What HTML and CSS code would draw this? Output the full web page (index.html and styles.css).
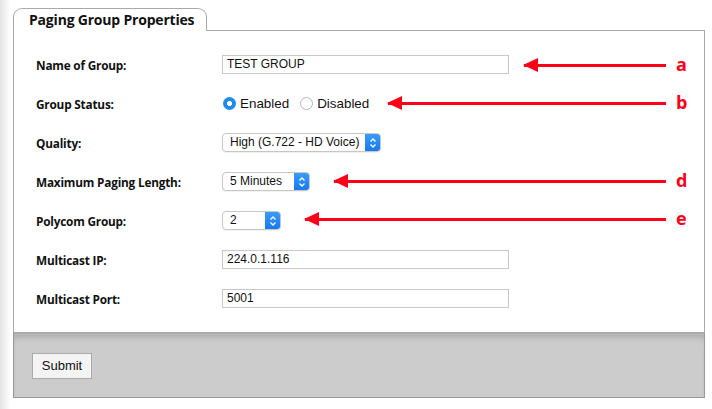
FILE: index.html
```html
<!DOCTYPE html>
<html>
<head>
<meta charset="utf-8">
<link rel="stylesheet" href="styles.css">
</head>
<body>
<div class="page">
  <div class="tabbar">
    <div class="tab">Paging Group Properties</div>
    <div class="tabline"></div>
  </div>
  <div class="panel">
    <div class="row">
      <div class="label">Name of Group:</div>
      <div class="field"><div class="input wide">TEST GROUP</div></div>
    </div>
    <div class="row">
      <div class="label">Group Status:</div>
      <div class="field radios">
        <span class="radio on"></span><span class="rtext">Enabled</span>
        <span class="radio"></span><span class="rtext">Disabled</span>
      </div>
    </div>
    <div class="row">
      <div class="label">Quality:</div>
      <div class="field"><div class="select s-quality"><span class="stext">High (G.722 - HD Voice)</span><span class="stepper"><svg width="8" height="12" viewBox="0 0 8 12"><path d="M1.5 4.5 L4 2 L6.5 4.5 M1.5 7.5 L4 10 L6.5 7.5" fill="none" stroke="#fff" stroke-width="1.3"/></svg></span></div></div>
    </div>
    <div class="row">
      <div class="label">Maximum Paging Length:</div>
      <div class="field"><div class="select s-length"><span class="stext">5 Minutes</span><span class="stepper"><svg width="8" height="12" viewBox="0 0 8 12"><path d="M1.5 4.5 L4 2 L6.5 4.5 M1.5 7.5 L4 10 L6.5 7.5" fill="none" stroke="#fff" stroke-width="1.3"/></svg></span></div></div>
    </div>
    <div class="row">
      <div class="label">Polycom Group:</div>
      <div class="field"><div class="select s-group"><span class="stext">2</span><span class="stepper"><svg width="8" height="12" viewBox="0 0 8 12"><path d="M1.5 4.5 L4 2 L6.5 4.5 M1.5 7.5 L4 10 L6.5 7.5" fill="none" stroke="#fff" stroke-width="1.3"/></svg></span></div></div>
    </div>
    <div class="row">
      <div class="label">Multicast IP:</div>
      <div class="field"><div class="input wide">224.0.1.116</div></div>
    </div>
    <div class="row">
      <div class="label">Multicast Port:</div>
      <div class="field"><div class="input wide">5001</div></div>
    </div>

    <div class="note n-a"><span class="arrow"></span><span class="letter">a</span></div>
    <div class="note n-b"><span class="arrow"></span><span class="letter">b</span></div>
    <div class="note n-d"><span class="arrow"></span><span class="letter">d</span></div>
    <div class="note n-e"><span class="arrow"></span><span class="letter">e</span></div>
  </div>
  <div class="footer">
    <div class="button">Submit</div>
  </div>
</div>
</body>
</html>
```

FILE: styles.css
```css
html, body {
  margin: 0;
  padding: 0;
}
body {
  width: 712px;
  height: 409px;
  background: linear-gradient(to right, #e4e4e4 0px, #f4f4f4 6px, #ffffff 11px);
  font-family: "Liberation Sans", Arial, sans-serif;
  overflow: hidden;
}
.page {
  padding: 8px 7px 0 13px;
  width: 692px;
}
.tabbar {
  display: flex;
  align-items: flex-end;
  height: 23px;
}
.tab {
  box-sizing: border-box;
  width: 194px;
  height: 23px;
  border: 1px solid #aaa;
  border-bottom: none;
  border-radius: 9px 9px 0 0;
  background: #fff;
  font-family: "Open Sans", sans-serif;
  font-weight: 700;
  font-size: 14px;
  letter-spacing: -0.2px;
  color: #111;
  padding: 1px 0 0 15px;
  line-height: 20px;
}
.tabline {
  flex: 1;
  border-bottom: 1px solid #aaa;
}
.panel {
  position: relative;
  border-left: 1px solid #aaa;
  border-right: 1px solid #aaa;
  background: #fff;
  padding: 14px 0 15px 0;
  height: 272px;
}
.row {
  display: flex;
  align-items: center;
  height: 39px;
}
.label {
  width: 186px;
  padding-left: 22px;
  font-family: "Open Sans", sans-serif;
  font-weight: 700;
  font-size: 11.8px;
  letter-spacing: -0.2px;
  color: #111;
}
.field {
  display: flex;
  align-items: center;
}
.input {
  box-sizing: border-box;
  height: 19px;
  border: 1px solid #c8c8c8;
  font-size: 12px;
  line-height: 17px;
  padding-left: 4px;
  color: #111;
}
.wide {
  width: 287px;
}
.radios {
  height: 19px;
}
.radio {
  box-sizing: border-box;
  display: inline-block;
  width: 13px;
  height: 13px;
  border-radius: 50%;
  border: 1px solid #b8b8b8;
  background: #fff;
  margin-left: 1px;
}
.radio.on {
  border: none;
  background: radial-gradient(circle, #fff 0 2.2px, #1e8cf0 2.8px);
}
.rtext {
  font-size: 13.4px;
  color: #111;
  margin-left: 4px;
  margin-right: 10px;
}
.select {
  box-sizing: border-box;
  display: flex;
  align-items: stretch;
  height: 19px;
  border: 1px solid #c6c6c6;
  border-radius: 4px;
  background: #fff;
  overflow: hidden;
  box-shadow: 0 1px 1px rgba(0,0,0,0.06);
}
.stext {
  flex: 1;
  font-size: 12px;
  line-height: 17px;
  padding-left: 7px;
  color: #111;
  white-space: nowrap;
}
.stepper {
  width: 15px;
  background: linear-gradient(#3a9cfc, #1679f0);
  display: flex;
  align-items: center;
  justify-content: center;
}
.s-quality { width: 159px; }
.s-length { width: 88px; }
.s-group { width: 59px; }

.note {
  position: absolute;
  display: flex;
  align-items: center;
  height: 20px;
}
.arrow {
  position: relative;
  display: block;
  height: 3px;
  background: #ff0019;
}
.arrow::before {
  content: "";
  position: absolute;
  left: -1px;
  top: -5.5px;
  border-right: 15px solid #ff0019;
  border-top: 7px solid transparent;
  border-bottom: 7px solid transparent;
}
.letter {
  font-family: "Open Sans", sans-serif;
  font-weight: 700;
  font-size: 18px;
  color: #ff0019;
  margin-left: 10px;
  line-height: 20px;
  margin-top: -2px;
}
.n-a { left: 510px; top: 24px; }
.n-a .arrow { width: 142px; }
.n-b { left: 374px; top: 62px; }
.n-b .arrow { width: 278px; }
.n-d { left: 320px; top: 140px; }
.n-d .arrow { width: 332px; }
.n-e { left: 291px; top: 178px; }
.n-e .arrow { width: 361px; }

.footer {
  box-sizing: border-box;
  height: 66px;
  background: #cccccc;
  border: 1px solid #999;
  border-top: 2px solid #aaa;
  box-shadow: inset 0 6px 6px -3px rgba(0,0,0,0.18), inset 0 1px 0 #d8d8d8;
  padding: 19px 0 0 18px;
}
.button {
  box-sizing: border-box;
  width: 60px;
  height: 26px;
  background: #f4f4f4;
  border: 1px solid #aaa;
  font-size: 13px;
  line-height: 24px;
  text-align: center;
  color: #111;
}
```
